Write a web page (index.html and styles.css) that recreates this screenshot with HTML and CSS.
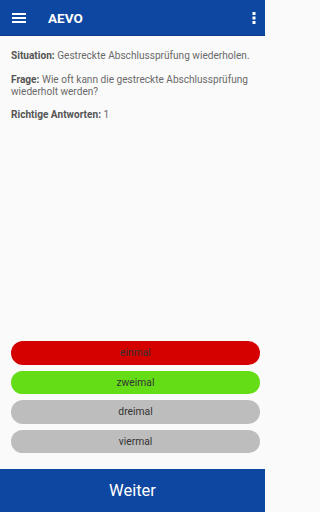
FILE: index.html
```html
<!DOCTYPE html>
<html lang="de">
<head>
<meta charset="utf-8">
<title>AEVO</title>
<link rel="stylesheet" href="styles.css">
</head>
<body>
<div class="app">
  <header class="topbar">
    <svg class="menu" width="14" height="10" viewBox="0 0 14 10"><rect x="0" y="0" width="14" height="2" fill="#fff"/><rect x="0" y="4" width="14" height="2" fill="#fff"/><rect x="0" y="8" width="14" height="2" fill="#fff"/></svg>
    <span class="title">AEVO</span>
    <svg class="more" width="4" height="12" viewBox="0 0 4 12"><rect x="0.5" y="0" width="3" height="3" fill="#fff"/><rect x="0.5" y="4.5" width="3" height="3" fill="#fff"/><rect x="0.5" y="9" width="3" height="3" fill="#fff"/></svg>
  </header>
  <main class="content">
    <p class="line"><b>Situation:</b> Gestreckte Abschlussprüfung wiederholen.</p>
    <p class="line"><b>Frage:</b> Wie oft kann die gestreckte Abschlussprüfung wiederholt werden?</p>
    <p class="line"><b>Richtige Antworten:</b> 1</p>
  </main>
  <div class="answers">
    <div class="answer wrong">einmal</div>
    <div class="answer right">zweimal</div>
    <div class="answer">dreimal</div>
    <div class="answer">viermal</div>
  </div>
  <footer class="next">Weiter</footer>
</div>
</body>
</html>
```
FILE: styles.css
```css
html, body {
  margin: 0;
  padding: 0;
  background: #fafafa;
}
body {
  font-family: Roboto, "Liberation Sans", sans-serif;
}
.app {
  display: flex;
  flex-direction: column;
  width: 265px;
  height: 512px;
  background: #fafafa;
}
.topbar {
  height: 35px;
  background: #0e47a1;
  border-bottom: 1px solid #0a3a8c;
  display: flex;
  align-items: center;
  padding: 0 9px 0 12px;
  color: #fff;
}
.menu {
  flex: none;
}
.title {
  margin-left: 22px;
  font-weight: bold;
  font-size: 13.5px;
  flex: 1;
}
.more {
  flex: none;
}
.content {
  flex: 1;
  padding: 14px 11px 0;
}
.line {
  margin: 0 0 11.5px;
  font-size: 10.1px;
  line-height: 12px;
  color: #6a6a6a;
}
.line b {
  color: #555;
  font-weight: bold;
}
.answers {
  display: flex;
  flex-direction: column;
  gap: 6px;
  padding: 0 5px 16px 11px;
}
.answer {
  height: 23.5px;
  border-radius: 12px;
  background: #bdbdbd;
  display: flex;
  align-items: center;
  justify-content: center;
  font-size: 10.3px;
  color: #333;
}
.answer.wrong {
  background: #d50000;
}
.answer.right {
  background: #64dd17;
}
.next {
  height: 43px;
  background: #0e47a1;
  color: #fff;
  display: flex;
  align-items: center;
  justify-content: center;
  font-size: 16.5px;
}
```
